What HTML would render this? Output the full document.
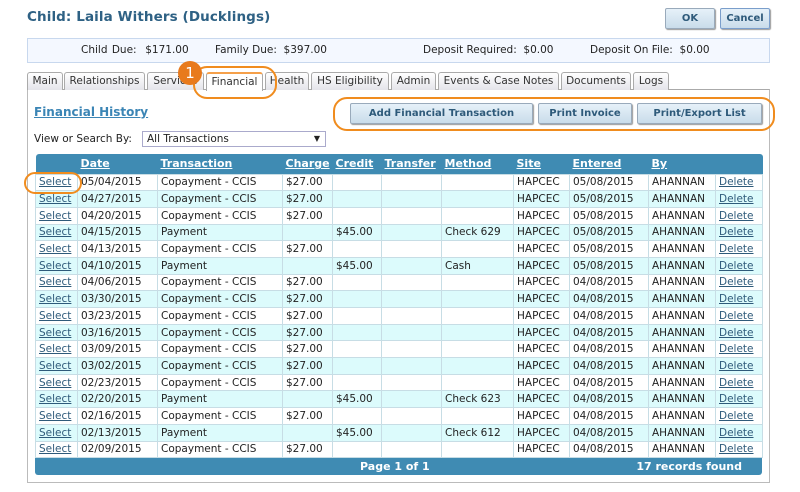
<!DOCTYPE html>
<html><head><style>
*{margin:0;padding:0;box-sizing:border-box}
body{width:800px;height:492px;background:#fff;font-family:"DejaVu Sans","Liberation Sans",sans-serif;font-size:10.5px;color:#222;position:relative;overflow:hidden}
.a{position:absolute}
h1{position:absolute;left:27px;top:9px;font-size:13.5px;color:#2e6184;font-weight:bold;font-family:"DejaVu Sans",sans-serif;letter-spacing:0.1px}
.btn{position:absolute;height:21px;border:1px solid #9ab;border-radius:2px;background:linear-gradient(#e6f1f9,#c9dcea);box-shadow:1px 1px 1px #999;font-weight:bold;font-size:10px;color:#2e5a7a;text-align:center;line-height:19px}
.info{left:27px;top:38px;width:743px;height:25px;border:1px solid #c8d8ee;background:#f4f8ff}
.tab{position:absolute;top:72px;height:18px;border:1px solid #aaa;border-bottom:none;border-radius:3px 3px 0 0;background:linear-gradient(#fff,#e4e4ea);font-size:10.5px;text-align:center;line-height:16px;color:#333}
.box{left:27px;top:89px;width:743px;height:394px;border:1px solid #bbb;border-top:1px solid #aaa}
table{position:absolute;left:35px;top:154px;width:727px;border-collapse:collapse;table-layout:fixed}
th{background:#3f8bb3;color:#fff;text-decoration:underline;text-align:left;height:20px;font-size:11px;padding:0 3px;font-weight:bold}
td{height:16.7px;border:1px solid #c7dde5;padding:0 3px;white-space:nowrap;overflow:hidden;font-size:10.5px}
tr.e td{background:#dcfbfc}
td.l{color:#2e5a7a;text-decoration:underline}
.ft{position:absolute;left:35px;top:458px;width:727px;height:17px;background:#3f8bb3;color:#fff;font-weight:bold;font-size:11px;line-height:17px;border-radius:0 0 3px 3px}
.ring{position:absolute;border:2px solid #f08c1e;border-radius:14px}
</style></head><body>
<h1>Child: Laila Withers (Ducklings)</h1>
<div class="btn" style="left:665px;top:8px;width:50px">OK</div>
<div class="btn" style="left:720px;top:8px;width:50px;border-color:#7a9ecb">Cancel</div>
<div class="a info"></div>
<div class="a" style="left:81px;top:44px;word-spacing:1px">Child Due:&nbsp; $171.00</div>
<div class="a" style="left:215px;top:44px">Family Due:&nbsp; $397.00</div>
<div class="a" style="left:423px;top:44px">Deposit Required:&nbsp; $0.00</div>
<div class="a" style="left:590px;top:44px">Deposit On File:&nbsp; $0.00</div>
<div class="a box"></div>
<div class="tab" style="left:27px;width:36px">Main</div>
<div class="tab" style="left:64px;width:81px">Relationships</div>
<div class="tab" style="left:147px;width:57px">Services</div>
<div class="tab" style="left:206px;width:57px;background:#fff;height:19px;border-top:2px solid #f5a04a">Financial</div>
<div class="tab" style="left:265px;width:44px">Health</div>
<div class="tab" style="left:311px;width:78px">HS Eligibility</div>
<div class="tab" style="left:391px;width:45px">Admin</div>
<div class="tab" style="left:438px;width:121px">Events &amp; Case Notes</div>
<div class="tab" style="left:561px;width:70px">Documents</div>
<div class="tab" style="left:633px;width:36px">Logs</div>
<div class="ring" style="left:193px;top:66px;width:84px;height:33px"></div>
<div class="a" style="left:178px;top:61px;width:24px;height:24px;border-radius:50%;background:#e87a1c;color:#fff;font-size:15px;text-align:center;line-height:24px">1</div>
<div class="a" style="left:34px;top:105px;font-size:12px;font-weight:bold;color:#3b85b5;text-decoration:underline">Financial History</div>
<div class="ring" style="left:333px;top:97px;width:442px;height:34px"></div>
<div class="btn" style="left:350px;top:103px;width:183px">Add Financial Transaction</div>
<div class="btn" style="left:538px;top:103px;width:94px">Print Invoice</div>
<div class="btn" style="left:637px;top:103px;width:125px">Print/Export List</div>
<div class="a" style="left:34px;top:133px">View or Search By:</div>
<div class="a" style="left:142px;top:131px;width:184px;height:16px;border:1px solid #aac;padding-left:4px;line-height:14px">All Transactions<span style="position:absolute;right:5px;font-size:8px">▼</span></div>
<table>
<colgroup><col style="width:42px"><col style="width:80px"><col style="width:125px"><col style="width:50px"><col style="width:49px"><col style="width:60px"><col style="width:72px"><col style="width:56px"><col style="width:79px"><col style="width:67px"><col style="width:47px"></colgroup>
<tr><th style="border-radius:3px 0 0 0"></th><th>Date</th><th>Transaction</th><th>Charge</th><th>Credit</th><th>Transfer</th><th>Method</th><th>Site</th><th>Entered</th><th>By</th><th style="border-radius:0 3px 0 0"></th></tr>
<tr><td class="l">Select</td><td>05/04/2015</td><td>Copayment - CCIS</td><td>$27.00</td><td></td><td></td><td></td><td>HAPCEC</td><td>05/08/2015</td><td>AHANNAN</td><td class="l">Delete</td></tr>
<tr class="e"><td class="l">Select</td><td>04/27/2015</td><td>Copayment - CCIS</td><td>$27.00</td><td></td><td></td><td></td><td>HAPCEC</td><td>05/08/2015</td><td>AHANNAN</td><td class="l">Delete</td></tr>
<tr><td class="l">Select</td><td>04/20/2015</td><td>Copayment - CCIS</td><td>$27.00</td><td></td><td></td><td></td><td>HAPCEC</td><td>05/08/2015</td><td>AHANNAN</td><td class="l">Delete</td></tr>
<tr class="e"><td class="l">Select</td><td>04/15/2015</td><td>Payment</td><td></td><td>$45.00</td><td></td><td>Check 629</td><td>HAPCEC</td><td>05/08/2015</td><td>AHANNAN</td><td class="l">Delete</td></tr>
<tr><td class="l">Select</td><td>04/13/2015</td><td>Copayment - CCIS</td><td>$27.00</td><td></td><td></td><td></td><td>HAPCEC</td><td>05/08/2015</td><td>AHANNAN</td><td class="l">Delete</td></tr>
<tr class="e"><td class="l">Select</td><td>04/10/2015</td><td>Payment</td><td></td><td>$45.00</td><td></td><td>Cash</td><td>HAPCEC</td><td>05/08/2015</td><td>AHANNAN</td><td class="l">Delete</td></tr>
<tr><td class="l">Select</td><td>04/06/2015</td><td>Copayment - CCIS</td><td>$27.00</td><td></td><td></td><td></td><td>HAPCEC</td><td>04/08/2015</td><td>AHANNAN</td><td class="l">Delete</td></tr>
<tr class="e"><td class="l">Select</td><td>03/30/2015</td><td>Copayment - CCIS</td><td>$27.00</td><td></td><td></td><td></td><td>HAPCEC</td><td>04/08/2015</td><td>AHANNAN</td><td class="l">Delete</td></tr>
<tr><td class="l">Select</td><td>03/23/2015</td><td>Copayment - CCIS</td><td>$27.00</td><td></td><td></td><td></td><td>HAPCEC</td><td>04/08/2015</td><td>AHANNAN</td><td class="l">Delete</td></tr>
<tr class="e"><td class="l">Select</td><td>03/16/2015</td><td>Copayment - CCIS</td><td>$27.00</td><td></td><td></td><td></td><td>HAPCEC</td><td>04/08/2015</td><td>AHANNAN</td><td class="l">Delete</td></tr>
<tr><td class="l">Select</td><td>03/09/2015</td><td>Copayment - CCIS</td><td>$27.00</td><td></td><td></td><td></td><td>HAPCEC</td><td>04/08/2015</td><td>AHANNAN</td><td class="l">Delete</td></tr>
<tr class="e"><td class="l">Select</td><td>03/02/2015</td><td>Copayment - CCIS</td><td>$27.00</td><td></td><td></td><td></td><td>HAPCEC</td><td>04/08/2015</td><td>AHANNAN</td><td class="l">Delete</td></tr>
<tr><td class="l">Select</td><td>02/23/2015</td><td>Copayment - CCIS</td><td>$27.00</td><td></td><td></td><td></td><td>HAPCEC</td><td>04/08/2015</td><td>AHANNAN</td><td class="l">Delete</td></tr>
<tr class="e"><td class="l">Select</td><td>02/20/2015</td><td>Payment</td><td></td><td>$45.00</td><td></td><td>Check 623</td><td>HAPCEC</td><td>04/08/2015</td><td>AHANNAN</td><td class="l">Delete</td></tr>
<tr><td class="l">Select</td><td>02/16/2015</td><td>Copayment - CCIS</td><td>$27.00</td><td></td><td></td><td></td><td>HAPCEC</td><td>04/08/2015</td><td>AHANNAN</td><td class="l">Delete</td></tr>
<tr class="e"><td class="l">Select</td><td>02/13/2015</td><td>Payment</td><td></td><td>$45.00</td><td></td><td>Check 612</td><td>HAPCEC</td><td>04/08/2015</td><td>AHANNAN</td><td class="l">Delete</td></tr>
<tr><td class="l">Select</td><td>02/09/2015</td><td>Copayment - CCIS</td><td>$27.00</td><td></td><td></td><td></td><td>HAPCEC</td><td>04/08/2015</td><td>AHANNAN</td><td class="l">Delete</td></tr>
</table>
<div class="ft"><span class="a" style="left:325px">Page 1 of 1</span><span class="a" style="right:20px">17 records found</span></div>
<div class="ring" style="left:24px;top:172px;width:58px;height:22px;border-radius:12px"></div>
</body></html>
